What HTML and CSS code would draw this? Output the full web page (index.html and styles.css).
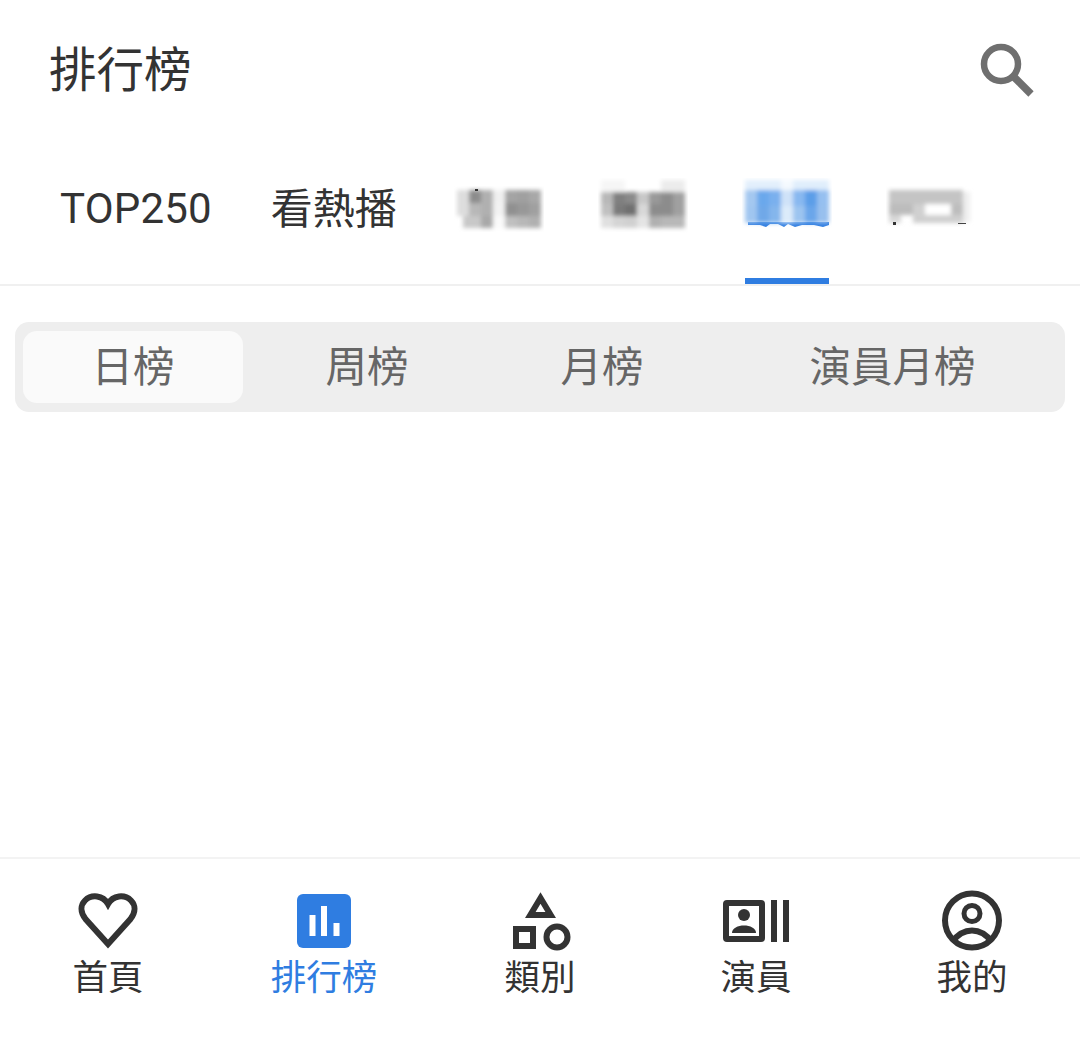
FILE: index.html
```html
<!DOCTYPE html>
<html lang="zh-Hant">
  <head>
    <meta charset="UTF-8" />
    <title>排行榜</title>
    <link rel="stylesheet" href="styles.css">
  </head>
  <body>
    <div class="app">
      <header class="top">
        <h1 class="title">排行榜</h1>
        <svg class="search" width="56" height="56" viewBox="0 0 56 56">
          <circle cx="21" cy="21" r="17" fill="none" stroke="#6f6f6f" stroke-width="6.500"/>
          <path d="M34 34 L51 51" stroke="#6f6f6f" stroke-width="7.500" fill="none"/>
        </svg>
      </header>

      <nav class="tabs">
        <span class="tab latin">TOP250</span>
        <span class="tab zh">看熱播</span>
        <!-- these tab labels are pixelated in the source -->
        <span class="tab">
          <svg class="mosaic" width="90" height="60" viewBox="0 0 90 60">
            <g filter="url(#soft)">
              <rect x="3" y="12" width="12" height="13" fill="#ddd"/><rect x="15" y="12" width="12" height="13" fill="#8c8c8c"/><rect x="27" y="12" width="12" height="13" fill="#b0b0b0"/><rect x="39" y="12" width="12" height="13" fill="#f0f0f0"/><rect x="51" y="12" width="12" height="13" fill="#a4a4a4"/><rect x="63" y="12" width="12" height="13" fill="#a0a0a0"/><rect x="75" y="12" width="12" height="13" fill="#a8a8a8"/>
              <rect x="3" y="25" width="12" height="13" fill="#ddd"/><rect x="15" y="25" width="12" height="13" fill="#b8b8b8"/><rect x="27" y="25" width="12" height="13" fill="#b0b0b0"/><rect x="39" y="25" width="12" height="13" fill="#f2f2f2"/><rect x="51" y="25" width="12" height="13" fill="#909090"/><rect x="63" y="25" width="12" height="13" fill="#989898"/><rect x="75" y="25" width="12" height="13" fill="#a0a0a0"/>
              <rect x="9" y="38" width="18" height="12" fill="#c8c8c8"/><rect x="27" y="38" width="12" height="12" fill="#a8a8a8"/><rect x="39" y="38" width="12" height="12" fill="#fafafa"/><rect x="51" y="38" width="12" height="12" fill="#c0c0c0"/><rect x="63" y="38" width="12" height="12" fill="#b8b8b8"/><rect x="75" y="38" width="12" height="12" fill="#b0b0b0"/>
            </g>
            <rect x="21" y="11" width="3" height="2" fill="#333"/>
          </svg>
        </span>
        <span class="tab">
          <svg class="mosaic" width="90" height="60" viewBox="0 0 90 60">
            <g filter="url(#soft)">
              <rect x="3" y="2" width="24" height="12" fill="#f6f6f6"/><rect x="63" y="2" width="24" height="12" fill="#ececec"/>
              <rect x="3" y="14" width="12" height="12" fill="#b8b8b8"/><rect x="15" y="14" width="12" height="12" fill="#808080"/><rect x="27" y="14" width="12" height="12" fill="#8a8a8a"/><rect x="39" y="14" width="12" height="12" fill="#c8c8c8"/><rect x="51" y="14" width="12" height="12" fill="#999"/><rect x="63" y="14" width="12" height="12" fill="#8c8c8c"/><rect x="75" y="14" width="12" height="12" fill="#a0a0a0"/>
              <rect x="3" y="26" width="12" height="12" fill="#c0c0c0"/><rect x="15" y="26" width="12" height="12" fill="#7a7a7a"/><rect x="27" y="26" width="12" height="12" fill="#707070"/><rect x="39" y="26" width="12" height="12" fill="#d8d8d8"/><rect x="51" y="26" width="12" height="12" fill="#8c8c8c"/><rect x="63" y="26" width="12" height="12" fill="#8c8c8c"/><rect x="75" y="26" width="12" height="12" fill="#a0a0a0"/>
              <rect x="3" y="38" width="12" height="12" fill="#e0e0e0"/><rect x="15" y="38" width="12" height="12" fill="#d4d4d4"/><rect x="27" y="38" width="12" height="12" fill="#d0d0d0"/><rect x="39" y="38" width="12" height="12" fill="#e4e4e4"/><rect x="51" y="38" width="12" height="12" fill="#b0b0b0"/><rect x="63" y="38" width="12" height="12" fill="#b8b8b8"/><rect x="75" y="38" width="12" height="12" fill="#b8b8b8"/>
            </g>
          </svg>
        </span>
        <span class="tab active">
          <svg class="mosaic" width="90" height="60" viewBox="0 0 90 60">
            <path d="M6 44 H87 V47 L81 49 L72 47 L60 47 L53 49 L46 46 L42 49 L36 46 L28 46 L24 49 L18 47 L6 47 Z" fill="#2f7de1"/>
            <g filter="url(#soft)">
              <rect x="3" y="2" width="36" height="10" fill="#e2effc"/><rect x="39" y="2" width="12" height="10" fill="#f4f9fe"/><rect x="51" y="2" width="36" height="10" fill="#e0eefc"/>
              <rect x="3" y="12" width="12" height="16" fill="#a4c8f0"/><rect x="15" y="12" width="12" height="16" fill="#6aa8ec"/><rect x="27" y="12" width="12" height="16" fill="#7ab0ee"/><rect x="39" y="12" width="12" height="16" fill="#cfe2f8"/><rect x="51" y="12" width="12" height="16" fill="#88b8f0"/><rect x="63" y="12" width="12" height="16" fill="#5c9ee8"/><rect x="75" y="12" width="12" height="16" fill="#96c0f0"/>
              <rect x="3" y="28" width="12" height="17" fill="#a0c6f0"/><rect x="15" y="28" width="12" height="17" fill="#6fa8e8"/><rect x="27" y="28" width="12" height="17" fill="#84b6ec"/><rect x="39" y="28" width="12" height="17" fill="#dcebfa"/><rect x="51" y="28" width="12" height="17" fill="#9cc4f0"/><rect x="63" y="28" width="12" height="17" fill="#6aa6ea"/><rect x="75" y="28" width="12" height="17" fill="#98c0ee"/>
            </g>
          </svg>
        </span>
        <span class="tab">
          <svg class="mosaic" width="90" height="60" viewBox="0 0 90 60">
            <g filter="url(#soft)">
              <rect x="3" y="12" width="74" height="14" fill="#c4c4c4"/>
              <rect x="3" y="26" width="24" height="11" fill="#bcbcbc"/><rect x="27" y="26" width="12" height="11" fill="#d0d0d0"/><rect x="39" y="26" width="26" height="11" fill="#fff"/><rect x="65" y="26" width="12" height="11" fill="#bdbdbd"/>
              <rect x="3" y="37" width="12" height="8" fill="#d8d8d8"/><rect x="27" y="37" width="50" height="8" fill="#cfcfcf"/>
              <rect x="77" y="14" width="7" height="30" fill="#eee"/>
            </g>
            <rect x="7" y="44" width="3" height="3" fill="#333"/><rect x="72" y="45" width="8" height="1" fill="#444"/>
          </svg>
        </span>
      </nav>

      <div class="segments">
        <span class="seg on">日榜</span>
        <span class="seg">周榜</span>
        <span class="seg">月榜</span>
        <span class="seg last">演員月榜</span>
      </div>

      <main class="content"></main>

      <footer class="bottom">
        <a class="nav-item">
          <svg class="nav-icon" width="64" height="60" viewBox="0 0 64 60">
            <path d="M32 53 L9.500 28 C4 21 4.500 14 9 9.500 C15.500 3 27 4 32 13 C37 4 48.500 3 55 9.500 C59.500 14 60 21 54.500 28 Z" fill="none" stroke="#333" stroke-width="6"/>
          </svg>
          <span>首頁</span>
        </a>
        <a class="nav-item current">
          <svg class="nav-icon" width="64" height="60" viewBox="0 0 64 60">
            <rect x="5" y="3" width="54" height="54" rx="6" fill="#2f7de1"/>
            <rect x="17.500" y="24" width="6" height="21" fill="#fff"/>
            <rect x="29" y="15" width="6" height="30" fill="#fff"/>
            <rect x="41.500" y="32" width="6" height="13" fill="#fff"/>
          </svg>
          <span>排行榜</span>
        </a>
        <a class="nav-item">
          <svg class="nav-icon" width="64" height="60" viewBox="0 0 64 60">
            <path d="M32.500 7 L42.700 24 H22.300 Z" fill="none" stroke="#333" stroke-width="6"/>
            <rect x="8" y="38" width="17" height="17" fill="none" stroke="#333" stroke-width="6"/>
            <circle cx="49" cy="46" r="10.500" fill="none" stroke="#333" stroke-width="6"/>
          </svg>
          <span>類別</span>
        </a>
        <a class="nav-item">
          <svg class="nav-icon" width="64" height="60" viewBox="0 0 64 60">
            <rect x="2" y="12" width="36" height="36" rx="1" fill="none" stroke="#333" stroke-width="6"/>
            <circle cx="20" cy="24" r="6" fill="#333"/>
            <path d="M8 42 C8 37 14 34.500 20 34.500 C26 34.500 32 37 32 42 Z" fill="#333"/>
            <rect x="47" y="9" width="6" height="42" fill="#333"/>
            <rect x="59" y="9" width="6" height="42" fill="#333"/>
          </svg>
          <span>演員</span>
        </a>
        <a class="nav-item">
          <svg class="nav-icon" width="64" height="60" viewBox="0 0 64 60">
            <circle cx="32" cy="29.500" r="27" fill="none" stroke="#333" stroke-width="6"/>
            <circle cx="32" cy="22.500" r="8" fill="none" stroke="#333" stroke-width="5"/>
            <path d="M12 51 C18 43 25 39.500 32 39.500 C39 39.500 46 43 52 51" fill="none" stroke="#333" stroke-width="6"/>
          </svg>
          <span>我的</span>
        </a>
      </footer>
    </div>

    <svg class="defs" width="0" height="0">
      <filter id="soft"><feGaussianBlur stdDeviation="2"/></filter>
    </svg>
  </body>
</html>
```

FILE: styles.css
```css
* {
  margin: 0;
  padding: 0;
  box-sizing: border-box;
}
body {
  background: #fff;
  color: #333;
  font-family: Roboto, "Noto Sans CJK TC", sans-serif;
}
.app {
  display: flex;
  flex-direction: column;
  height: 1044px;
  overflow: hidden;
}
.top {
  display: flex;
  justify-content: space-between;
  align-items: center;
  height: 140px;
  padding: 4px 44px 0 49px;
}
.title {
  font-size: 47.5px;
  font-weight: 400;
  line-height: 1;
}
.search {
  margin-top: -2px;
}
.tabs {
  display: flex;
  gap: 60px;
  height: 146px;
  padding-left: 60px;
  border-bottom: 2px solid #f0f0f0;
}
.tab {
  position: relative;
  display: flex;
  align-items: center;
  height: 144px;
  padding-bottom: 8px;
  font-size: 42px;
}
.tab.latin {
  letter-spacing: 0.2px;
  margin-right: -1.2px;
}
.tab.zh {
  padding-bottom: 14px;
}
.tab.active::after {
  content: "";
  position: absolute;
  left: 0;
  right: 0;
  bottom: 0;
  height: 6px;
  background: #2f7de1;
}
.mosaic {
  margin: 0 -3px;
}
.segments {
  display: grid;
  grid-template-columns: 220px 248px 222px 1fr;
  height: 90px;
  margin: 36px 15px 0;
  padding: 9px 0 9px 8px;
  background: #eee;
  border-radius: 14px;
}
.seg {
  display: flex;
  justify-content: center;
  align-items: center;
  padding-bottom: 6px;
  font-size: 41.5px;
  color: #666;
}
.seg.on {
  background: #fafafa;
  border-radius: 14px;
}
.seg.last {
  padding-left: 7px;
}
.content {
  flex: 1;
}
.bottom {
  display: grid;
  grid-template-columns: repeat(5, 1fr);
  height: 187px;
  padding-top: 32px;
  border-top: 2px solid #f3f3f3;
}
.nav-item {
  display: flex;
  flex-direction: column;
  align-items: center;
  font-size: 35.5px;
  line-height: 54px;
}
.nav-item.current {
  color: #2f7de1;
}
.nav-icon {
  display: block;
  overflow: visible;
}
.defs {
  position: absolute;
}
```
